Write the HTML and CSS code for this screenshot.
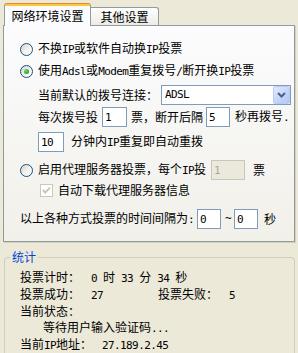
FILE: index.html
```html
<!DOCTYPE html>
<html lang="zh-CN">
<head>
<meta charset="utf-8">
<title>投票设置</title>
<link rel="stylesheet" href="styles.css">
</head>
<body>
<div class="tabs">
  <div class="tab active">网络环境设置</div>
  <div class="tab inactive">其他设置</div>
</div>
<div class="panel">
  <div class="row r1"><span class="radio"></span><span class="t">不换<span class="en">IP</span>或软件自动换<span class="en">IP</span>投票</span></div>
  <div class="row r2"><span class="radio on"></span><span class="t">使用<span class="en">Adsl</span>或<span class="en">Modem</span>重复拨号<span class="en">/</span>断开换<span class="en">IP</span>投票</span></div>
  <div class="row sub sel"><span class="t">当前默认的拨号连接：</span><div class="select"><span class="en">ADSL</span><span class="drop"><svg width="9" height="6" viewBox="0 0 9 6"><path d="M1 1 L4.5 4.5 L8 1" fill="none" stroke="#4D6185" stroke-width="2"/></svg></span></div></div>
  <div class="row sub r4"><span class="t">每次拨号投</span><input class="box w25 m4" value="1"><span class="t">票，断开后隔</span><input class="box w24 m5" value="5"><span class="t">秒再拨号<span class="en">.</span></span></div>
  <div class="row sub r5"><input class="box w26 m10" value="10"><span class="t">分钟内<span class="en">IP</span>重复即自动重拨</span></div>
  <div class="row r3"><span class="radio"></span><span class="t">启用代理服务器投票，每个<span class="en">IP</span>投</span><input class="box w34 m3 off" value="1" disabled><span class="t">票</span></div>
  <div class="row cb"><span class="check"><svg width="13" height="13" viewBox="0 0 13 13"><path d="M3 6 L5.2 8.5 L10 3.6" fill="none" stroke="#C7C5B8" stroke-width="2"/></svg></span><span class="t">自动下载代理服务器信息</span></div>
  <div class="row int"><span class="t">以上各种方式投票的时间间隔为<span class="en">:</span></span><input class="box w24 mi" value="0"><span class="en tilde">~</span><input class="box w24" value="0"><span class="t sec">秒</span></div>
</div>
<fieldset class="stats">
  <legend>统计</legend>
  <div class="srow"><span class="k">投票计时：</span><span class="en">0 </span>时<span class="en"> 33 </span>分<span class="en"> 34 </span>秒</div>
  <div class="srow"><span class="k">投票成功：</span><span class="en v">27</span><span class="k">投票失败：</span><span class="en">5</span></div>
  <div class="srow">当前状态：</div>
  <div class="srow wait">等待用户输入验证码<span class="en">...</span></div>
  <div class="srow"><span class="ipk">当前<span class="en">IP</span>地址：</span><span class="en">27.189.2.45</span></div>
</fieldset>
</body>
</html>
```
FILE: styles.css
```css
html, body {
  margin: 0;
  padding: 0;
}
body {
  width: 298px;
  height: 353px;
  overflow: hidden;
  background: #ECE9D8;
  font-family: "Noto Sans CJK SC", sans-serif;
  font-size: 12px;
  line-height: 14px;
  color: #000;
}
.en {
  font-family: "DejaVu Sans Mono", monospace;
  font-size: 11px;
  letter-spacing: -0.6px;
}

/* tabs */
.tabs {
  display: flex;
  align-items: flex-end;
  height: 25px;
  padding-left: 4px;
}
.tab {
  box-sizing: border-box;
  display: flex;
  align-items: center;
  justify-content: center;
}
.tab.active {
  position: relative;
  z-index: 1;
  width: 87px;
  height: 23px;
  margin-bottom: -1px;
  padding-top: 2px;
  border-left: 1px solid #919B9C;
  border-right: 1px solid #919B9C;
  border-radius: 3px 3px 0 0;
  background: linear-gradient(#E68B2C 0 1px, #FFC73C 1px 3px, #FCFCFE 3px);
}
.tab.inactive {
  width: 68px;
  height: 18px;
  border-top: 1px solid #919B9C;
  border-right: 1px solid #919B9C;
  border-radius: 0 3px 0 0;
  background: linear-gradient(#FFFFFF, #ECEBE6);
}

/* panel */
.panel {
  box-sizing: border-box;
  height: 217px;
  margin: 0 3px;
  padding-top: 13px;
  border: 1px solid #919B9C;
  background: linear-gradient(#FCFCFE, #F1F0E9);
  box-shadow: 1px 1px 0 #D3D0C1;
}
.row {
  display: flex;
  align-items: center;
  height: 20px;
  padding-left: 16px;
  white-space: nowrap;
}
.row.sub { padding-left: 34px; }
.r2 { margin-top: 2px; }
.sel { margin-top: 4px; }
.r4 { margin-top: 2px; }
.r5 { margin-top: 5px; padding-left: 35px; }
.r3 { margin-top: 8px; }
.cb { padding-left: 36px; }
.int { margin-top: 9px; }

.radio {
  flex: none;
  box-sizing: border-box;
  width: 13px;
  height: 13px;
  margin-right: 5px;
  border: 1px solid #1C5180;
  border-radius: 50%;
  background: linear-gradient(135deg, #D6D4C9 0%, #F3F3EF 55%, #FFFFFF 100%);
}
.radio.on::after {
  content: "";
  display: block;
  width: 5px;
  height: 5px;
  margin: 3px;
  border-radius: 50%;
  background: radial-gradient(circle at 35% 35%, #7ADB7A, #21A121 70%);
}
.check {
  flex: none;
  box-sizing: border-box;
  width: 13px;
  height: 13px;
  margin-right: 5px;
  border: 1px solid #CAC8BB;
  background: #FFFFFF;
  display: flex;
  align-items: center;
  justify-content: center;
}
.check svg { display: block; margin: -1px; }

.select {
  box-sizing: border-box;
  display: flex;
  align-items: center;
  width: 130px;
  height: 20px;
  margin-left: 3px;
  padding-left: 3px;
  border: 1px solid #7F9DB9;
  background: #FFFFFF;
}
.select .en { flex: 1; }
.drop {
  box-sizing: border-box;
  display: flex;
  align-items: center;
  justify-content: center;
  width: 17px;
  height: 18px;
  border: 1px solid #BACCF4;
  border-radius: 2px;
  background: linear-gradient(135deg, #E3EBFE 0%, #C6D6FB 50%, #B1C6F5 100%);
}
.drop svg { display: block; }

.box {
  box-sizing: border-box;
  height: 20px;
  margin: 0;
  padding: 0 0 0 2px;
  border: 1px solid #7F9DB9;
  background: #FFFFFF;
  color: #000;
  font-family: "DejaVu Sans Mono", monospace;
  font-size: 11px;
  letter-spacing: -0.6px;
  outline: none;
}
.box.off {
  border-color: #C9C7BA;
  background: #EBE9DB;
  color: #ACA899;
}
.w24 { width: 24px; }
.w25 { width: 25px; }
.w26 { width: 26px; }
.w34 { width: 34px; }
.m4 { margin: 0 4px; }
.m5 { margin: 0 5px 0 3px; }
.m10 { margin-right: 7px; }
.m3 { margin: 0 8px 0 5px; }
.mi { margin-left: 3px; }
.tilde { margin: 0 3px 0 4px; }
.sec { margin-left: 6px; }

/* statistics group */
.stats {
  box-sizing: border-box;
  height: 103px;
  margin: 8px 3px 0 4px;
  padding: 4px 0 0 15px;
  border: 1px solid #D0D0BF;
  border-bottom: none;
  border-radius: 4px 4px 0 0;
}
.stats legend {
  margin-left: -10px;
  padding: 0 2px;
  color: #0046D5;
  line-height: 14px;
}
.srow {
  height: 17px;
  line-height: 17px;
  white-space: nowrap;
}
.srow.wait {
  height: 16px;
  line-height: 15px;
  padding-left: 23px;
}
.srow:last-child {
  height: 16px;
}
.k {
  display: inline-block;
  width: 71px;
}
.v {
  display: inline-block;
  width: 67px;
}
.ipk {
  display: inline-block;
  width: 82px;
}
```
